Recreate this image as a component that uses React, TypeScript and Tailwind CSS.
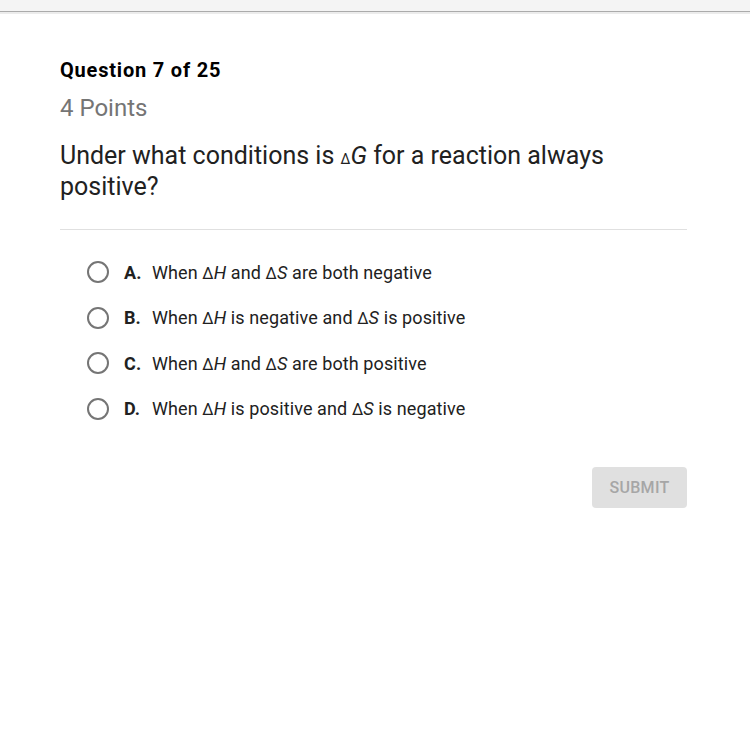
const options = [
  { key: 'A', pre: 'When ', a: 'H', mid: ' and ', b: 'S', post: ' are both negative' },
  { key: 'B', pre: 'When ', a: 'H', mid: ' is negative and ', b: 'S', post: ' is positive' },
  { key: 'C', pre: 'When ', a: 'H', mid: ' and ', b: 'S', post: ' are both positive' },
  { key: 'D', pre: 'When ', a: 'H', mid: ' is positive and ', b: 'S', post: ' is negative' },
];

function Delta({ v, small }: { v: string; small?: boolean }) {
  return (
    <span className="leading-none">
      <span className={small ? 'text-[14px] leading-none' : 'text-[16px] leading-none'}>∆</span>
      <span className="italic">{v}</span>
    </span>
  );
}

export default function App() {
  return (
    <div className="w-[750px] h-[750px] bg-white font-['Roboto',sans-serif] text-[#212121]">
      <div className="h-[12px] bg-[#f4f4f4] border-b border-[#ababab]" />
      <div className="h-[2px] bg-[#ececec]" />
      <div className="pl-[60px] pr-[63px] pt-[44px]">
        <h1 className="text-[20px] font-bold leading-[24px] tracking-[0.8px] text-black">Question 7 of 25</h1>
        <p className="text-[24px] leading-[28px] text-[#757575] mt-[12px]">4 Points</p>
        <p className="text-[25px] leading-[31px] text-[#212121] mt-[18px]">
          Under what conditions is <Delta v="G" small /> for a reaction always positive?
        </p>
        <div className="border-t border-[#e0e0e0] mt-[27px]" />
        <div className="flex flex-col pt-[19.5px] pl-[27px]">
          {options.map(o => (
            <label key={o.key} className="flex items-center h-[45.5px] text-[18px] tracking-[0.1px]">
              <span className="w-[22px] h-[22px] rounded-full border-2 border-[#757575] shrink-0" />
              <span className="ml-[15px] font-bold w-[28px]">{o.key}.</span>
              <span>
                {o.pre}<Delta v={o.a} />{o.mid}<Delta v={o.b} />{o.post}
              </span>
            </label>
          ))}
        </div>
        <div className="flex justify-end mt-[35.5px]">
          <button className="w-[95px] h-[41px] rounded-[4px] bg-[#e0e0e0] text-[#a6a6a6] text-[16px] font-medium tracking-[0.3px]">SUBMIT</button>
        </div>
      </div>
    </div>
  );
}
